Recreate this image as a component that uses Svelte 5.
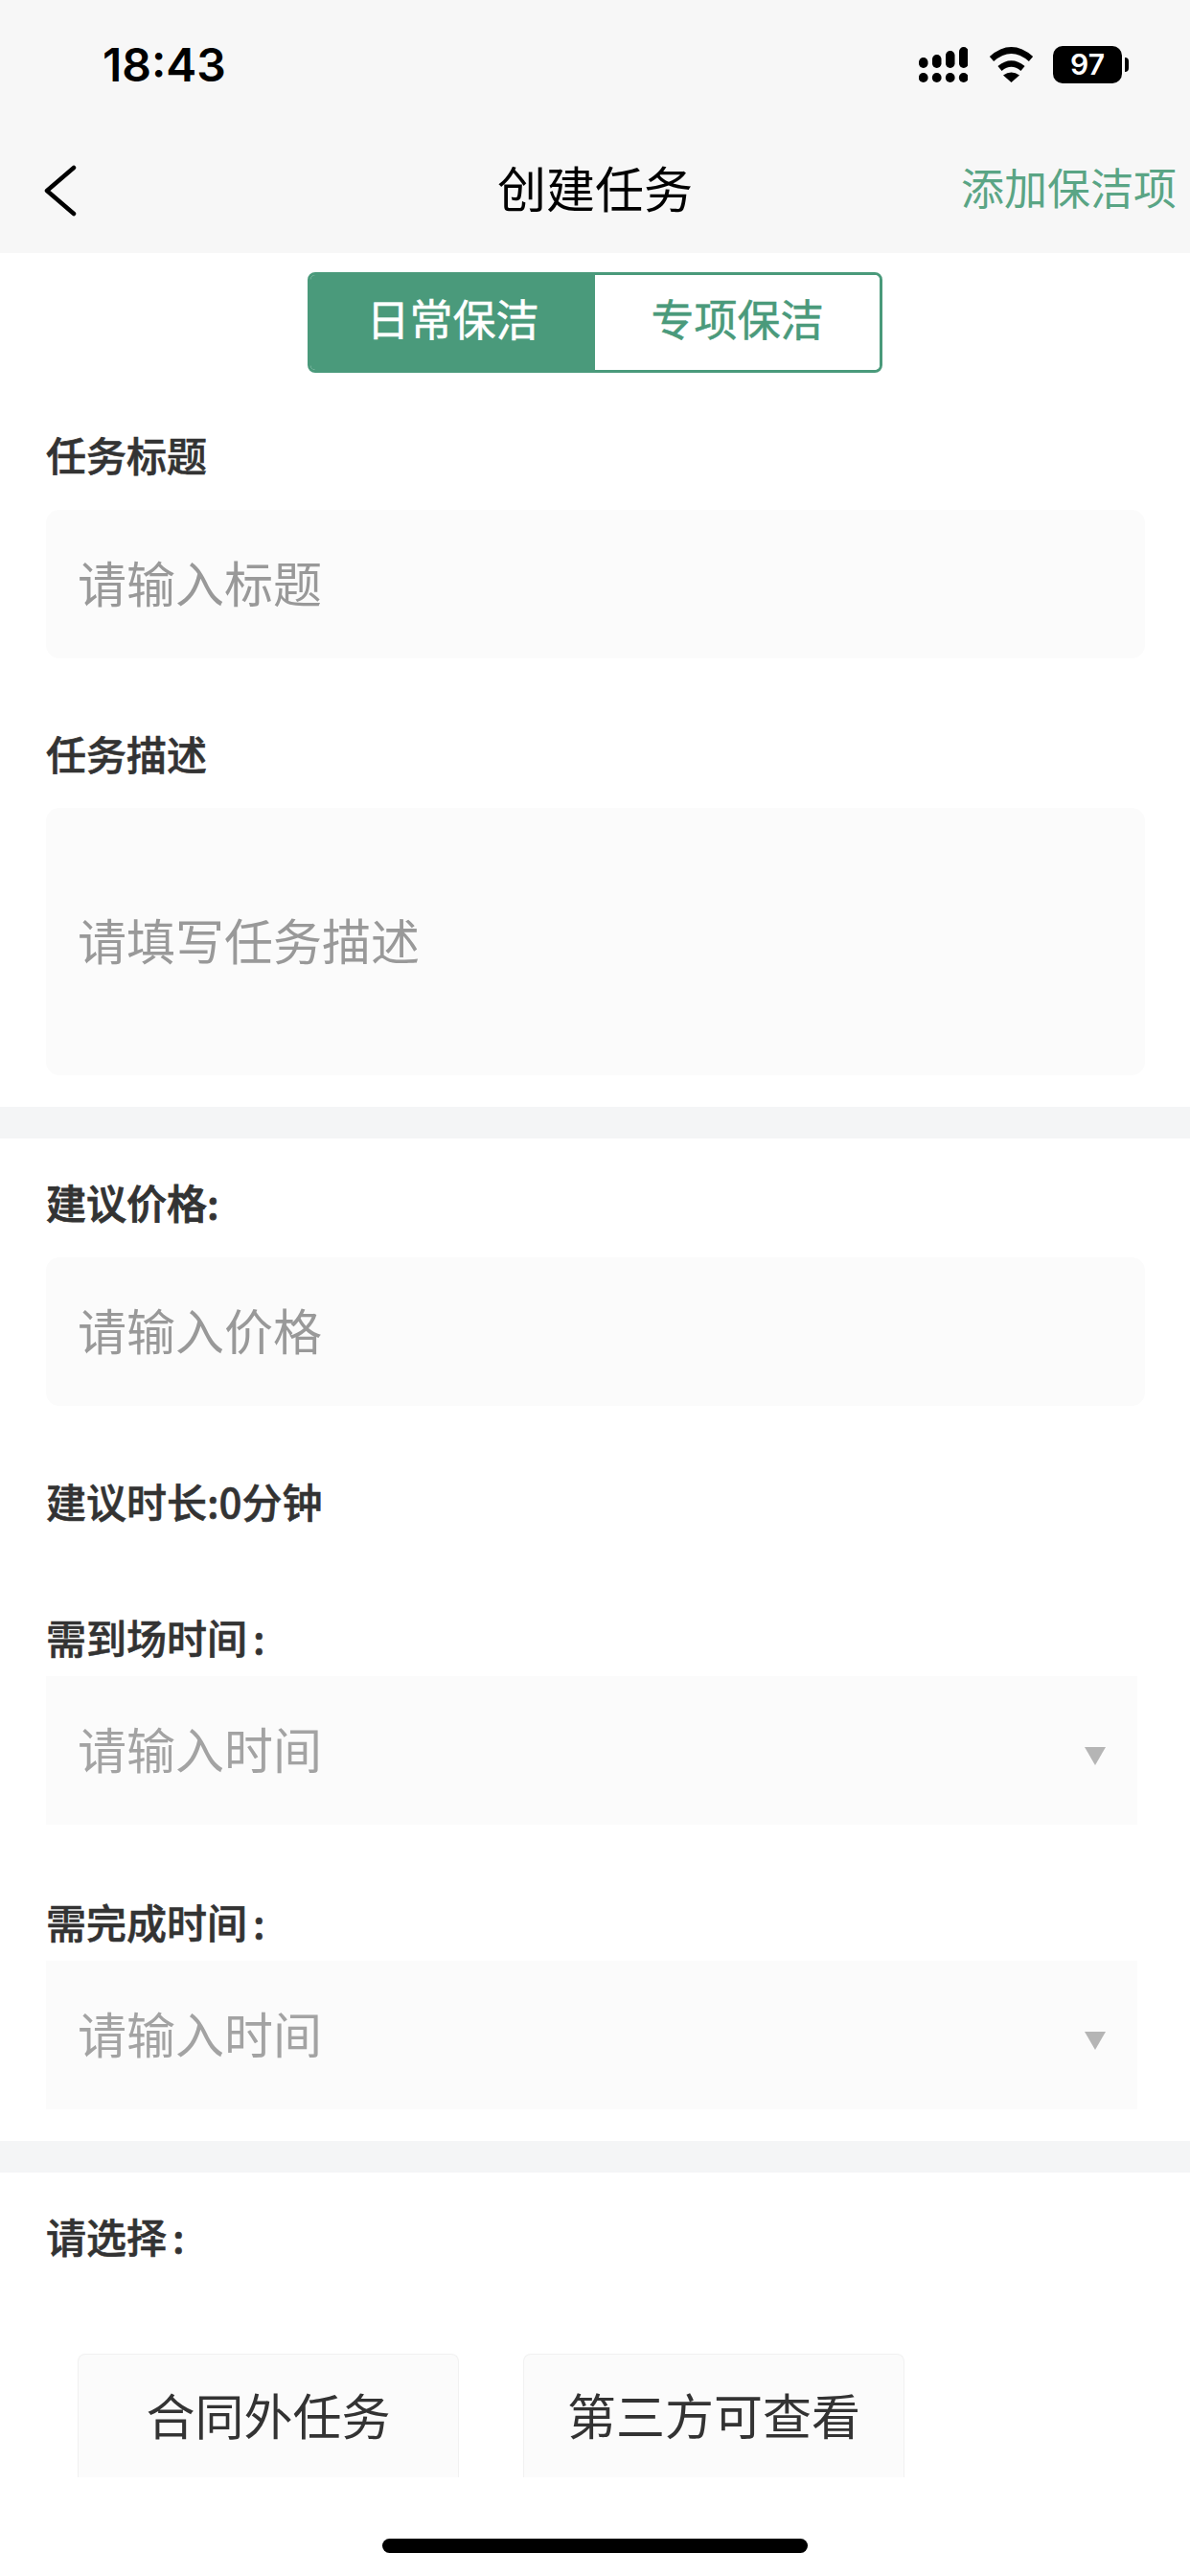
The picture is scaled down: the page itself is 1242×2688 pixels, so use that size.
<script>
  let mode = $state('daily');
</script>

<div class="page">
  <header class="top">
    <div class="status">
      <span class="time">18:43</span>
      <div class="indicators">
        <svg class="signal" width="51" height="37" viewBox="0 0 51 37" fill="#000">
          <rect x="0" y="11" width="9.5" height="11" rx="4.7" />
          <rect x="14" y="8" width="9.5" height="14" rx="4.7" />
          <rect x="28" y="4" width="9.5" height="18" rx="4.7" />
          <rect x="42" y="0" width="9.5" height="22" rx="4.7" />
          <circle cx="4.7" cy="32" r="4.9" />
          <circle cx="18.7" cy="32" r="4.9" />
          <circle cx="32.7" cy="32" r="4.9" />
          <circle cx="46.7" cy="32" r="4.9" />
        </svg>
        <svg class="wifi" width="47" height="37" viewBox="0 0 47 37">
          <path d="M3 12.5Q23.5 -5.5 44 12.5" fill="none" stroke="#000" stroke-width="6.5" />
          <path d="M11.5 22.5Q23.5 12.5 35.5 22.5" fill="none" stroke="#000" stroke-width="6.5" />
          <path d="M15 29.5Q23.5 23.5 32 29.5L23.5 37Z" fill="#000" />
        </svg>
        <div class="battery">97</div>
      </div>
    </div>
    <nav class="nav">
      <svg class="back" width="40" height="60" viewBox="0 0 40 60">
        <path d="M37 5 L9 29 L37 53" fill="none" stroke="#000" stroke-width="4.5" stroke-linecap="round" stroke-linejoin="round" />
      </svg>
      <h1>创建任务</h1>
      <span class="add">添加保洁项</span>
    </nav>
  </header>

  <section class="block">
    <div class="tabs">
      <button class:on={mode === 'daily'} onclick={() => (mode = 'daily')}>日常保洁</button>
      <button class:on={mode === 'special'} onclick={() => (mode = 'special')}>专项保洁</button>
    </div>

    <div class="label first">任务标题</div>
    <div class="input">请输入标题</div>

    <div class="label spaced">任务描述</div>
    <div class="input area">请填写任务描述</div>
  </section>

  <div class="band"></div>

  <section class="block">
    <div class="label first-in-block strong">建议价格:</div>
    <div class="input">请输入价格</div>

    <div class="label spaced">建议时长:0分钟</div>

    <div class="label arrival">需到场时间<span class="colon">:</span></div>
    <div class="input select">
      请输入时间
      <span class="arrow"></span>
    </div>

    <div class="label finish">需完成时间<span class="colon">:</span></div>
    <div class="input select last">
      请输入时间
      <span class="arrow"></span>
    </div>
  </section>

  <div class="band"></div>

  <section class="block">
    <div class="label first-in-block">请选择<span class="colon">:</span></div>
    <div class="chips">
      <div class="chip">合同外任务</div>
      <div class="chip">第三方可查看</div>
    </div>
  </section>

  <div class="home"></div>
</div>

<style>
  :global(body) {
    margin: 0;
    background: #fff;
  }

  .page {
    position: relative;
    width: 1242px;
    height: 2688px;
    overflow: hidden;
    background: #fff;
    font-family: "Noto Sans CJK SC", "Noto Sans", sans-serif;
    color: #333;
  }

  .top {
    height: 264px;
    background: #f7f7f7;
  }

  .status {
    height: 132px;
    display: flex;
    align-items: center;
    justify-content: space-between;
    padding: 3px 71px 0 107px;
    box-sizing: border-box;
  }

  .time {
    font-family: Inter, sans-serif;
    font-size: 48px;
    font-weight: 600;
    color: #000;
  }

  .indicators {
    display: flex;
    align-items: center;
    gap: 20px;
  }

  .signal {
    margin-right: 2px;
  }

  .battery {
    position: relative;
    width: 72px;
    height: 39px;
    border-radius: 10px;
    background: #000;
    color: #fff;
    font-family: Inter, sans-serif;
    font-size: 30px;
    font-weight: 600;
    line-height: 39px;
    text-align: center;
  }

  .battery::after {
    content: "";
    position: absolute;
    left: 75px;
    top: 12px;
    width: 4px;
    height: 15px;
    border-radius: 0 8px 8px 0;
    background: #000;
  }

  .nav {
    position: relative;
    height: 132px;
    display: flex;
    align-items: center;
    justify-content: center;
  }

  .back {
    position: absolute;
    left: 40px;
    top: 38px;
  }

  .nav h1 {
    margin: 0 0 6px;
    font-size: 51px;
    font-weight: 400;
    color: #000;
  }

  .add {
    position: absolute;
    right: 14px;
    top: 47%;
    transform: translateY(-50%);
    font-size: 45px;
    color: #5aa585;
  }

  .block {
    padding: 0 47px 0 48px;
  }

  .tabs {
    display: flex;
    width: 600px;
    height: 105px;
    margin: 20px 0 0 273px;
    box-sizing: border-box;
    border: 3px solid #4a9a7b;
    border-radius: 8px;
    overflow: hidden;
  }

  .tabs button {
    flex: 1;
    padding: 0 0 10px;
    border: 0;
    background: #fff;
    color: #4a9a7b;
    font: inherit;
    font-size: 45px;
    -webkit-text-stroke: 0.5px currentColor;
  }

  .tabs button.on {
    background: #4a9a7b;
    color: #fff;
  }

  .label {
    height: 58px;
    line-height: 52px;
    margin-bottom: 26px;
    font-size: 42px;
    font-weight: 500;
    color: #333;
    -webkit-text-stroke: 0.6px #333;
  }

  .strong {
    -webkit-text-stroke: 0.9px #333;
  }

  .colon {
    margin-left: 6px;
  }

  .first {
    margin-top: 59px;
  }

  .spaced {
    margin-top: 73px;
    margin-bottom: 25px;
  }

  .first-in-block {
    margin-top: 40px;
  }

  .arrival {
    margin-top: 84px;
    margin-bottom: 9px;
  }

  .finish {
    margin-top: 75px;
    margin-bottom: 9px;
  }

  .input {
    position: relative;
    display: flex;
    align-items: center;
    box-sizing: border-box;
    height: 155px;
    padding: 0 0 5px 33px;
    border-radius: 14px;
    background: #fbfbfb;
    font-size: 51px;
    color: #999;
  }

  .area {
    height: 279px;
    margin-bottom: 33px;
  }

  .select {
    width: 1139px;
    border-radius: 0;
    color: #a3a3a3;
  }

  .last {
    margin-bottom: 33px;
  }

  .arrow {
    position: absolute;
    right: 33px;
    top: 74px;
    width: 0;
    height: 0;
    border-left: 11px solid transparent;
    border-right: 11px solid transparent;
    border-top: 19px solid #b5b5b5;
  }

  .band {
    height: 33px;
    background: #f4f5f6;
  }

  .chips {
    display: flex;
    gap: 67px;
    margin: 91px 0 0 33px;
  }

  .chip {
    width: 398px;
    height: 129px;
    box-sizing: border-box;
    padding-bottom: 5px;
    display: flex;
    align-items: center;
    justify-content: center;
    border: 1px solid #f1f1f1;
    border-bottom: 0;
    border-radius: 8px 8px 0 0;
    background: #fbfbfb;
    font-size: 51px;
    color: #333;
  }

  .home {
    position: absolute;
    left: 399px;
    top: 2649px;
    width: 444px;
    height: 15px;
    border-radius: 8px;
    background: #000;
  }
</style>
